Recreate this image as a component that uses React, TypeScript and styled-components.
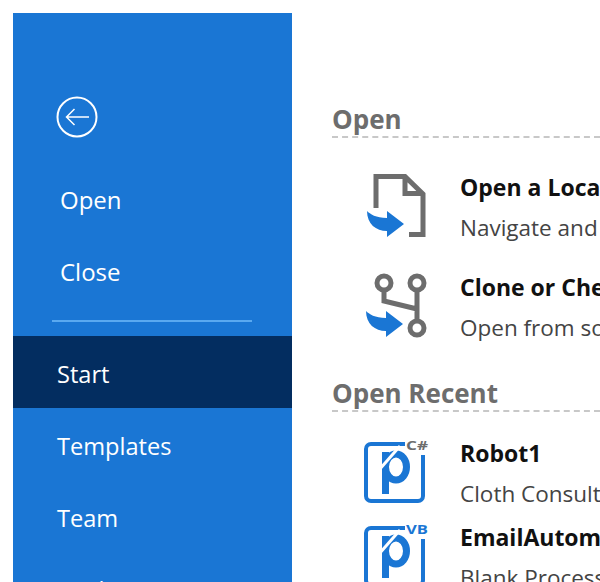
import styled, { createGlobalStyle } from 'styled-components';

const GlobalStyle = createGlobalStyle`
  html, body {
    margin: 0;
    height: 100%;
    overflow: hidden;
    background: #fff;
    font-family: 'Open Sans', 'Noto Sans', sans-serif;
  }
`;

const BLUE = '#1a76d4';
const GREY = '#6d6d6d';

const Page = styled.div`
  display: flex;
  width: 600px;
  height: 582px;
  overflow: hidden;
`;

const Sidebar = styled.nav`
  flex: none;
  width: 279px;
  height: 569px;
  margin: 13px 0 0 13px;
  padding-top: 83px;
  box-sizing: border-box;
  background: ${BLUE};
  color: #fff;
  overflow: hidden;
`;

const BackButton = styled.svg`
  display: block;
  width: 42px;
  height: 42px;
  margin: 0 0 26px 43px;
`;

const NavItem = styled.div<{ $active?: boolean }>`
  height: 72px;
  line-height: 76px;
  padding-left: 44px;
  font-size: 23.6px;
  background: ${(p) => (p.$active ? '#032d60' : 'transparent')};
`;

const CommandItem = styled.div`
  height: 72px;
  line-height: 72px;
  padding-left: 47px;
  font-size: 24px;
`;

const Divider = styled.div`
  width: 200px;
  height: 2px;
  margin: 12px 0 14px 39px;
  background: #5aa9f0;
`;

const Main = styled.main`
  flex: 1;
  min-width: 0;
  padding: 104px 0 0 40px;
`;

const SectionTitle = styled.h2`
  margin: 0;
  height: 32px;
  line-height: 30px;
  font-size: 26px;
  font-weight: 700;
  color: ${GREY};
  border-bottom: 2px dashed #c8c8c8;
`;

const RowList = styled.div<{ $top: number; $gap: number; $bottom?: number }>`
  display: flex;
  flex-direction: column;
  gap: ${(p) => p.$gap}px;
  margin: ${(p) => p.$top}px 0 ${(p) => p.$bottom ?? 0}px;
`;

const Row = styled.div`
  display: flex;
  height: 80px;
  flex: none;
`;

const RowIcon = styled.svg`
  flex: none;
  width: 72px;
  height: 80px;
  margin: 0 28px;
`;

const RowText = styled.div`
  min-width: 0;
  white-space: nowrap;
`;

const RowTitle = styled.div`
  height: 40px;
  line-height: 39px;
  font-size: 23px;
  font-weight: 700;
  color: #111;
`;

const RowDesc = styled.div`
  height: 40px;
  line-height: 39px;
  font-size: 22.5px;
  color: #444;
`;

const Arrow = ({ dx = 0, dy = 0 }: { dx?: number; dy?: number }) => (
  <path
    transform={`translate(${dx} ${dy})`}
    fill={BLUE}
    d="M367 211C370 214 376 218 387 218V211L404 224L387 237V231C376 231 367 224 367 211Z"
  />
);

const FileIcon = () => (
  <RowIcon viewBox="360 168 72 80">
    <path
      fill="none"
      stroke={GREY}
      strokeWidth="5"
      d="M376 208V176.500H405L423 194V234.500H409M405 176.500V193.500H423"
    />
    <Arrow />
  </RowIcon>
);

const BranchIcon = () => (
  <RowIcon viewBox="360 268 72 80">
    <g fill="none" stroke={GREY} strokeWidth="5">
      <circle cx="384" cy="283" r="7" />
      <circle cx="417" cy="283" r="7" />
      <circle cx="417" cy="328" r="7" />
      <path d="M417 290V321M384 290V301L417 309" />
    </g>
    <Arrow dx={-1} dy={100} />
  </RowIcon>
);

const ProjectIcon = ({ lang, color }: { lang: string; color: string }) => (
  <RowIcon viewBox="360 434 72 80">
    <path
      fill="none"
      stroke={BLUE}
      strokeWidth="4"
      d="M405 444H371a5 5 0 0 0-5 5V496a5 5 0 0 0 5 5H418a5 5 0 0 0 5-5V455"
    />
    <ellipse cx="396" cy="467" rx="10.500" ry="13" fill="none" stroke={BLUE} strokeWidth="7" />
    <rect x="382" y="452" width="7" height="42" fill={BLUE} />
    <path d="M400 446L379 470" stroke="#fff" strokeWidth="3" />
    <text
      x="406"
      y="450"
      fontFamily="'Open Sans', sans-serif"
      fontWeight="700"
      fontSize="13"
      textLength="22"
      lengthAdjust="spacingAndGlyphs"
      fill={color}
    >
      {lang}
    </text>
  </RowIcon>
);

export default function App() {
  return (
    <>
      <GlobalStyle />
      <Page>
        <Sidebar>
          <BackButton viewBox="0 0 42 42">
            <circle cx="21" cy="21" r="19.500" fill="none" stroke="#fff" strokeWidth="2" />
            <path d="M33 21H10.500M18.500 13L10.500 21L18.500 29" fill="none" stroke="#fff" strokeWidth="1.500" />
          </BackButton>
          <CommandItem>Open</CommandItem>
          <CommandItem>Close</CommandItem>
          <Divider />
          <NavItem $active>Start</NavItem>
          <NavItem>Templates</NavItem>
          <NavItem>Team</NavItem>
          <NavItem>Tools</NavItem>
        </Sidebar>
        <Main>
          <SectionTitle>Open</SectionTitle>
          <RowList $top={30} $gap={20} $bottom={30}>
            <Row>
              <FileIcon />
              <RowText>
                <RowTitle>Open a Local Project</RowTitle>
                <RowDesc>Navigate and open</RowDesc>
              </RowText>
            </Row>
            <Row>
              <BranchIcon />
              <RowText>
                <RowTitle>Clone or Check out</RowTitle>
                <RowDesc>Open from source</RowDesc>
              </RowText>
            </Row>
          </RowList>
          <SectionTitle>Open Recent</SectionTitle>
          <RowList $top={22} $gap={4}>
            <Row>
              <ProjectIcon lang="C#" color={GREY} />
              <RowText>
                <RowTitle>Robot1</RowTitle>
                <RowDesc>Cloth Consulting</RowDesc>
              </RowText>
            </Row>
            <Row>
              <ProjectIcon lang="VB" color={BLUE} />
              <RowText>
                <RowTitle>EmailAutomation</RowTitle>
                <RowDesc>Blank Process</RowDesc>
              </RowText>
            </Row>
          </RowList>
        </Main>
      </Page>
    </>
  );
}
